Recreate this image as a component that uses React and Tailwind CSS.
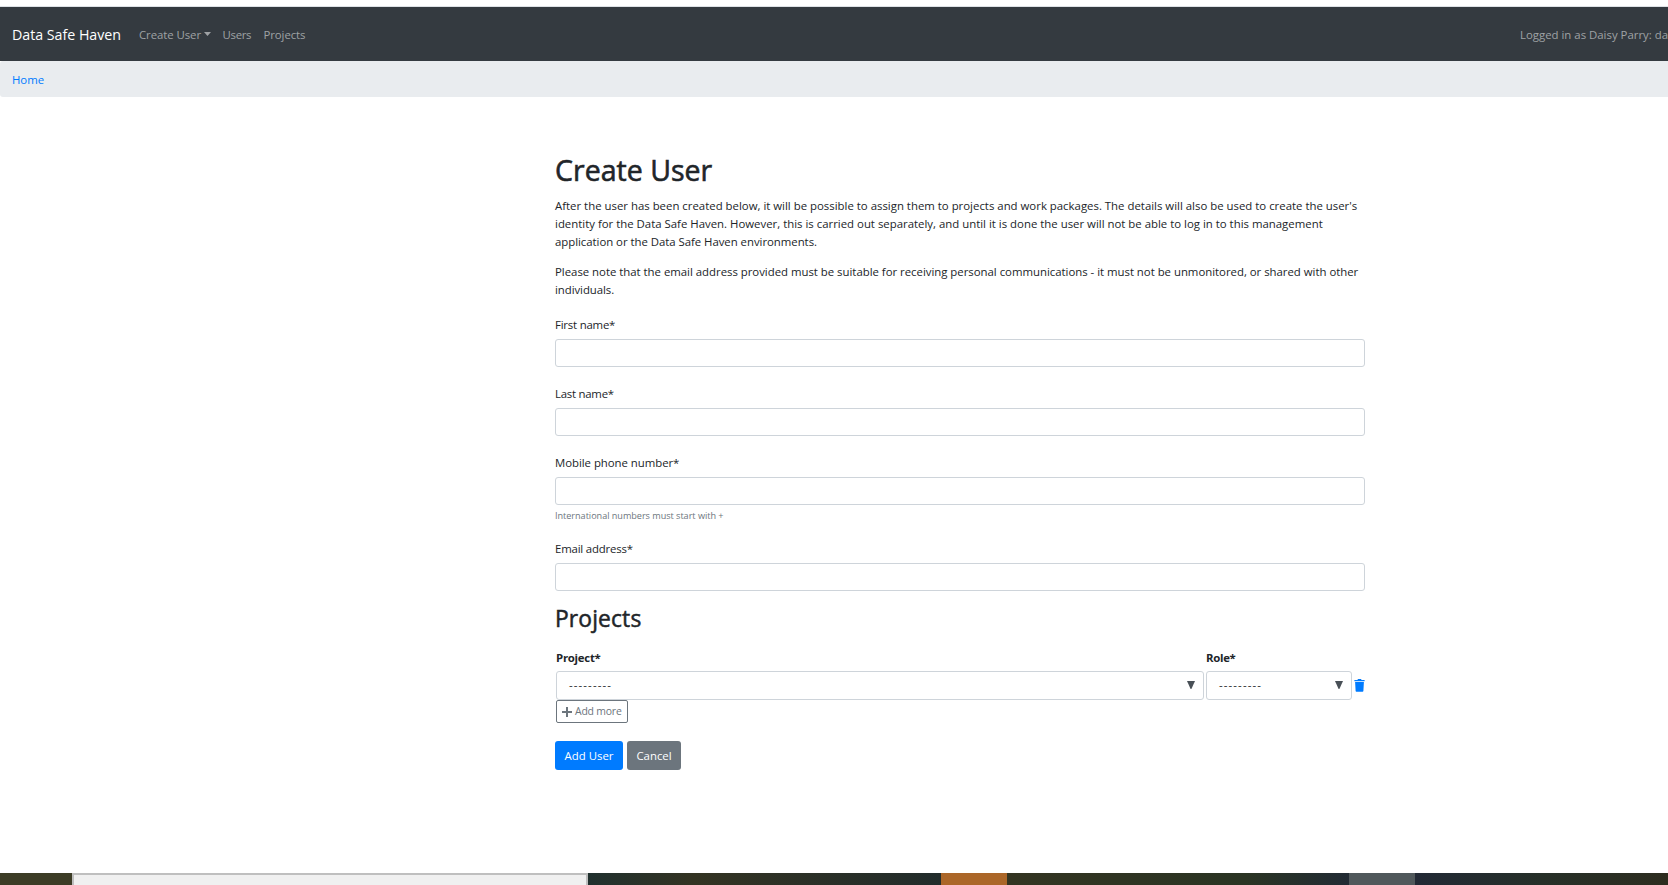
import React from "react";

const labelClass = "block h-[18px] leading-[18px]";
const inputClass =
  "mt-[5px] block h-[28px] w-full rounded-[3px] border border-[#ced4da] bg-white px-3 outline-none";

function Field({ label, tracking, help }) {
  return (
    <div className="mb-[18px]">
      <label className="block">
        <span className={`${labelClass} ${tracking}`}>{label}</span>
        <input type="text" className={inputClass} />
      </label>
      {help && (
        <small className="mt-[4px] block h-[13px] text-[9.12px] leading-[14px] tracking-[-0.03px] text-[#6c757d]">
          {help}
        </small>
      )}
    </div>
  );
}

function Picker({ width }) {
  return (
    <div
      className={`${width} flex h-[29px] items-center justify-between rounded-[3px] border border-[#ced4da] bg-white pr-[8px] pl-[12px] text-[#495057]`}
    >
      <span className="mb-[2px] tracking-[1.11px] text-[#212529]">---------</span>
      <svg className="mb-[2px] h-[8px] w-[8px]" viewBox="0 0 8 8" fill="#495057">
        <path d="M0 0h8L4.4 8h-.8z" />
      </svg>
    </div>
  );
}

function Navbar() {
  return (
    <nav className="flex h-[55px] items-center overflow-hidden border-t border-[#dee2e6] bg-[#343a40] pt-[2px] pl-3 whitespace-nowrap text-[#9fa2a5]">
      <a className="w-[109px] text-[14.25px] leading-[22px] tracking-[-0.03px] text-white">Data Safe Haven</a>
      <a className="ml-[18px] flex w-[72px] items-center">
        <span className="tracking-[-0.069px]">Create User</span>
        <svg className="mb-[2px] ml-[3px] h-[4px] w-[7px] shrink-0" viewBox="0 0 7 4" fill="currentColor">
          <path d="M0 0h7L3.5 4z" />
        </svg>
      </a>
      <a className="ml-[11.5px] w-[29px] tracking-[-0.3px]">Users</a>
      <a className="ml-[12px] tracking-[-0.08px]">Projects</a>
      <span className="ml-auto w-[148px] shrink-0">Logged in as Daisy Parry: da</span>
    </nav>
  );
}

function DesktopEdge() {
  return (
    <div className="flex h-[12px] w-full">
      <div className="w-[72px] bg-[#3c3c26]" />
      <div className="w-[516px] border-x-2 border-t-2 border-[#bfbfbf] bg-[#f0f0f0]" />
      <div className="w-[353px] bg-linear-to-r from-[#20302e] via-[#333322] via-30% to-[#222c2b]" />
      <div className="w-[66px] bg-[#ab6628]" />
      <div className="w-[342px] bg-linear-to-r from-[#333421] via-[#2a3423] via-70% to-[#222b34]" />
      <div className="w-[66px] bg-[#50585b]" />
      <div className="flex-1 bg-linear-to-r from-[#222935] via-[#262f28] to-[#2d2d1f]" />
    </div>
  );
}

export default function App() {
  return (
    <div className="flex h-[885px] w-[1668px] flex-col overflow-hidden bg-white pt-[6px] font-['Open_Sans',sans-serif] text-[11.4px] leading-[18px] text-[#212529]">
      <Navbar />
      <div className="h-[36px] rounded-l-[3px] bg-[#e9ecef] pt-[10px] pl-3">
        <a className="tracking-[-0.048px] text-[#007bff]">Home</a>
      </div>

      <main className="ml-[555px] w-[810px] flex-1 pt-[55px]">
        <h1 className="mb-[9px] h-[36px] text-[28.5px] leading-[36px] font-medium tracking-[0.02px] [-webkit-text-stroke:0.6px_#212529]">
          Create User
        </h1>
        <p className="mb-[12px] whitespace-nowrap">
          After the user has been created below, it will be possible to assign them to projects and work packages. The
          details will also be used to create the user's
          <br />
          identity for the Data Safe Haven. However, this is carried out separately, and until it is done the user will
          not be able to log in to this management
          <br />
          <span className="tracking-[-0.036px]">application or the Data Safe Haven environments.</span>
        </p>
        <p className="mb-[17px] tracking-[-0.018px] whitespace-nowrap">
          Please note that the email address provided must be suitable for receiving personal communications - it must
          not be unmonitored, or shared with other
          <br />
          <span className="tracking-[-0.06px]">individuals.</span>
        </p>

        <Field label="First name*" tracking="tracking-[-0.2px]" />
        <Field label="Last name*" tracking="tracking-[-0.24px]" />
        <Field
          label="Mobile phone number*"
          tracking="tracking-[-0.04px]"
          help="International numbers must start with +"
        />
        <Field label="Email address*" tracking="tracking-[-0.18px]" />

        <h2 className="-mt-[4px] mb-[16px] h-[28px] text-[22.8px] leading-[28px] font-medium tracking-[0.15px] [-webkit-text-stroke:0.5px_#212529]">
          Projects
        </h2>

        <div className="ml-px flex gap-[2px]">
          <div>
            <div className="mb-[4px] h-[18px] font-bold tracking-[-0.26px]">Project*</div>
            <Picker width="w-[648px]" />
          </div>
          <div>
            <div className="mb-[4px] h-[18px] font-bold tracking-[-0.29px]">Role*</div>
            <Picker width="w-[146px]" />
          </div>
          <svg className="mt-[30px] h-[13px] w-[11px]" viewBox="0 0 11 13" fill="#007bff">
            <path d="M.4.9h3L4 .1h3l.6.8h3v1.4H.4zM1.1 3.1h8.8l-.5 8.6c0 .7-.5 1.1-1.2 1.1H2.8c-.7 0-1.2-.4-1.2-1.1z" />
          </svg>
        </div>

        <button className="ml-px flex h-[23px] w-[72px] items-center rounded-[2px] border border-[#6c757d] pl-[5px] text-[10.45px] text-[#6c757d]">
          <svg className="mr-[3px] h-[10px] w-[10px] shrink-0" viewBox="0 0 10 10" fill="currentColor">
            <path d="M4 0h2v4h4v2H6v4H4V6H0V4h4z" />
          </svg>
          <span className="mb-[2px] tracking-[-0.2px] whitespace-nowrap">Add more</span>
        </button>

        <div className="mt-[18px] flex gap-[4px] text-white">
          <button className="h-[29px] w-[68px] rounded-[3px] bg-[#007bff]">Add User</button>
          <button className="h-[29px] w-[54px] rounded-[3px] bg-[#6c757d]">Cancel</button>
        </div>
      </main>

      <DesktopEdge />
    </div>
  );
}
